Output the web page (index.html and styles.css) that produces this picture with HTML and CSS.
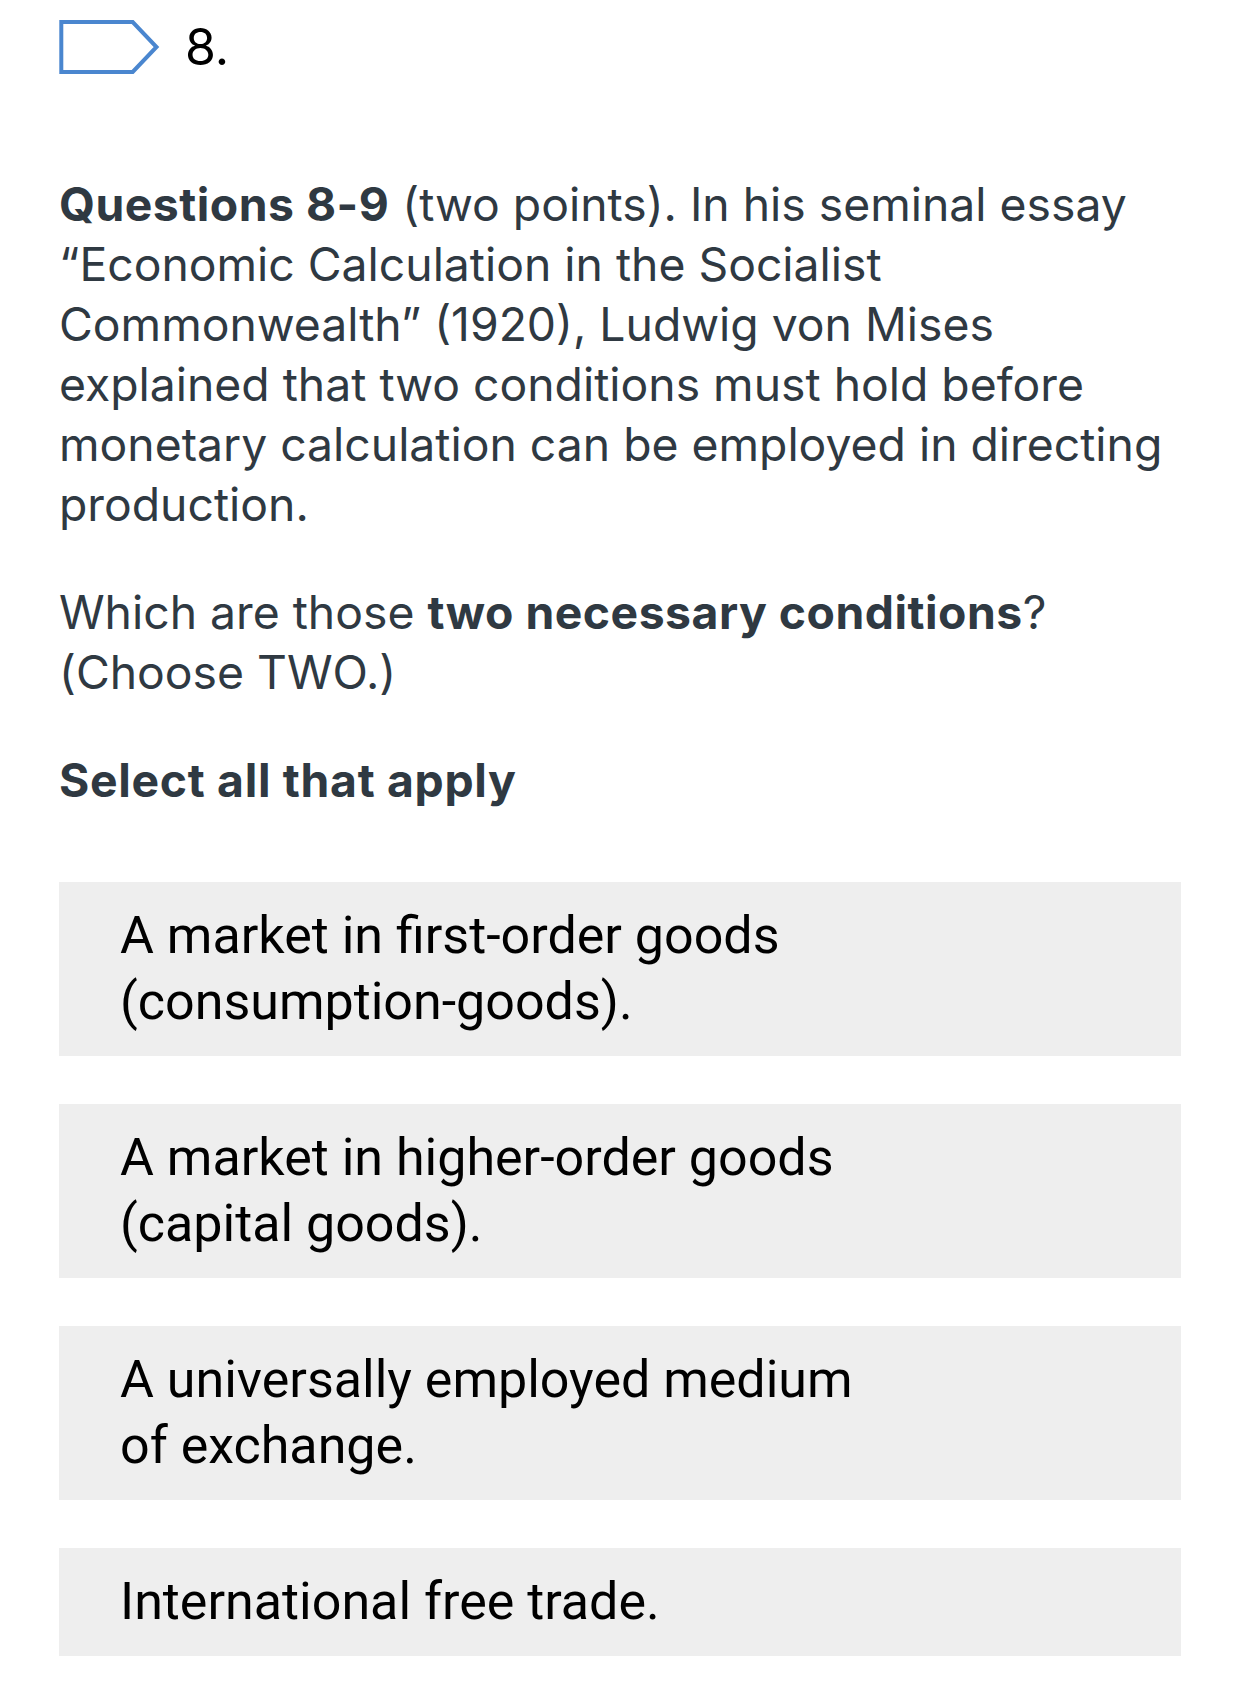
FILE: index.html
```html
<!DOCTYPE html>
<html lang="en">
<head>
<meta charset="utf-8">
<title>Question 8</title>
<link rel="stylesheet" href="styles.css">
</head>
<body>
<main class="page">
  <header class="qhead">
    <svg class="flag" width="104" height="58" viewBox="0 0 104 58" aria-hidden="true">
      <polygon points="4.3,4 75.7,4 99.5,29 75.7,54 4.3,54" fill="none" stroke="#4a86cf" stroke-width="4" stroke-linejoin="miter"/>
    </svg>
    <span class="qnum">8.</span>
  </header>

  <p class="para intro"><strong>Questions 8-9</strong> (two points). In his seminal essay “Economic Calculation in the Socialist Commonwealth” (1920), Ludwig von Mises explained that two conditions must hold before monetary calculation can be employed in directing production.</p>

  <p class="para ask">Which are those <strong>two necessary conditions</strong>? (Choose TWO.)</p>

  <p class="para select">Select all that apply</p>

  <ul class="options">
    <li class="option"><span class="opt-text">A market in first-order goods (consumption-goods).</span></li>
    <li class="option"><span class="opt-text">A market in higher-order goods (capital goods).</span></li>
    <li class="option"><span class="opt-text">A universally employed medium of exchange.</span></li>
    <li class="option"><span class="opt-text">International free trade.</span></li>
  </ul>
</main>
</body>
</html>
```

FILE: styles.css
```css
html, body {
  margin: 0;
  padding: 0;
  background: #ffffff;
}

.page {
  padding: 18px 60px 0 59px;
  font-family: Inter, "Noto Sans", sans-serif;
  color: #2f3942;
}

.qhead {
  display: flex;
  align-items: center;
  gap: 24px;
  height: 58px;
  margin-left: -2px;
}

.flag {
  display: block;
  flex: none;
}

.qnum {
  font-family: Inter, sans-serif;
  font-size: 50px;
  color: #000;
  line-height: 58px;
}

.para {
  margin: 0;
  font-size: 46.3px;
  line-height: 60px;
}

.para strong {
  font-weight: 700;
  letter-spacing: 0.5px;
}

.intro {
  margin-top: 98px;
}

.ask {
  margin-top: 48px;
}

.select {
  margin-top: 48px;
  font-weight: 700;
  letter-spacing: 0.7px;
}

.options {
  list-style: none;
  margin: 72px 0 0 0;
  padding: 0;
  display: flex;
  flex-direction: column;
  gap: 48px;
}

.option {
  background: #eeeeee;
  padding: 21px 61px;
}

.opt-text {
  display: block;
  max-width: 750px;
  font-family: Roboto, sans-serif;
  font-size: 52px;
  line-height: 66px;
  color: #000;
}
```
